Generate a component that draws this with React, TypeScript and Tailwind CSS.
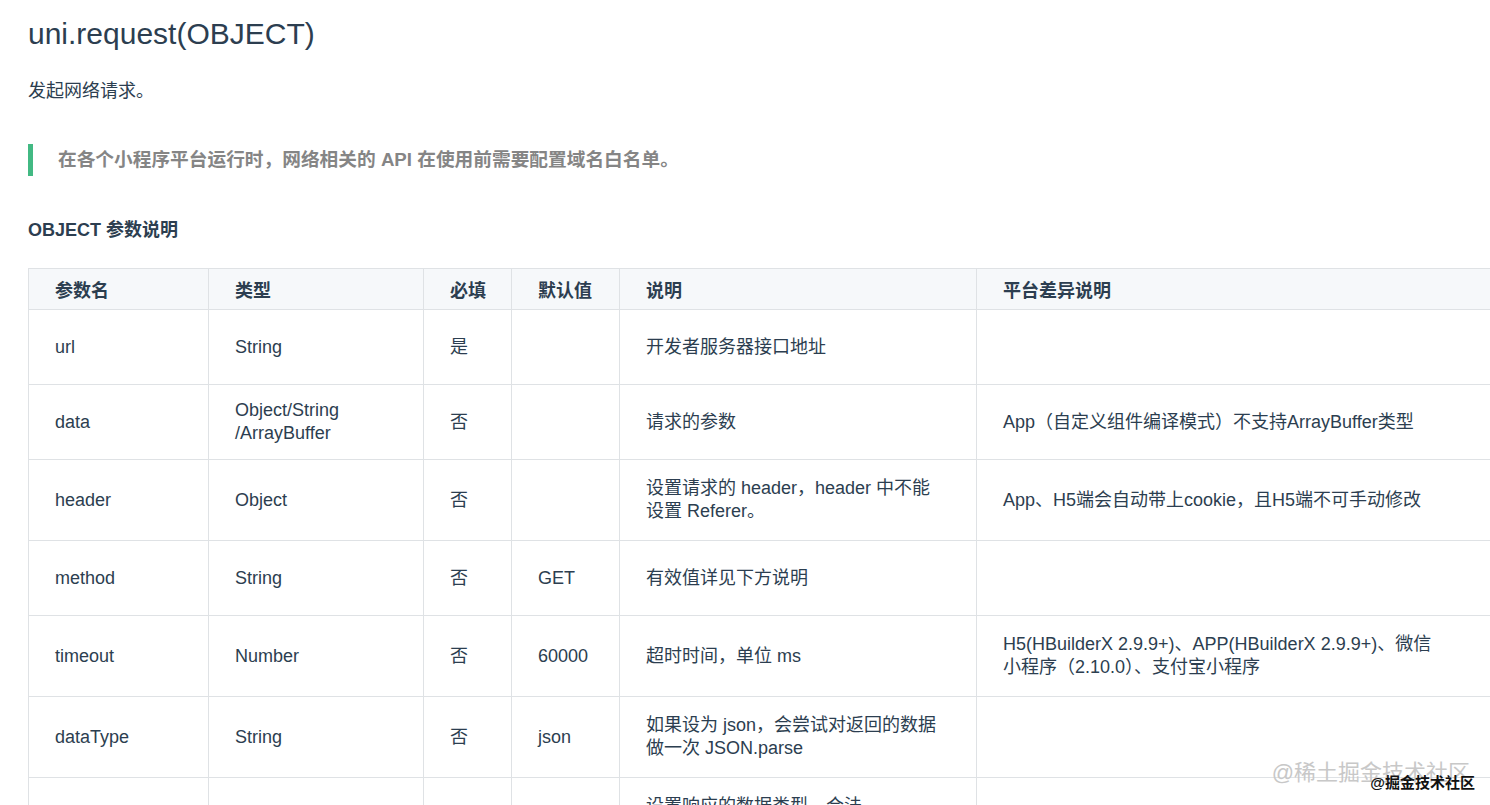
import React from 'react'

const FONT = '"Liberation Sans", "Noto Sans CJK SC", sans-serif'

type Row = {
  name: string
  type: React.ReactNode
  required: string
  def: string
  desc: React.ReactNode
  platform: React.ReactNode
  h: string
}

const rows: Row[] = [
  { name: 'url', type: 'String', required: '是', def: '', desc: '开发者服务器接口地址', platform: '', h: 'h-[75px]' },
  {
    name: 'data',
    type: (
      <>
        Object/String
        <br />
        /ArrayBuffer
      </>
    ),
    required: '否',
    def: '',
    desc: '请求的参数',
    platform: 'App（自定义组件编译模式）不支持ArrayBuffer类型',
    h: 'h-[75px]',
  },
  {
    name: 'header',
    type: 'Object',
    required: '否',
    def: '',
    desc: (
      <>
        设置请求的 header，header 中不能
        <br />
        设置 Referer。
      </>
    ),
    platform: 'App、H5端会自动带上cookie，且H5端不可手动修改',
    h: 'h-[81px]',
  },
  { name: 'method', type: 'String', required: '否', def: 'GET', desc: '有效值详见下方说明', platform: '', h: 'h-[75px]' },
  {
    name: 'timeout',
    type: 'Number',
    required: '否',
    def: '60000',
    desc: '超时时间，单位 ms',
    platform: (
      <>
        H5(HBuilderX 2.9.9+)、APP(HBuilderX 2.9.9+)、微信
        <br />
        小程序（2.10.0）、支付宝小程序
      </>
    ),
    h: 'h-[81px]',
  },
  {
    name: 'dataType',
    type: 'String',
    required: '否',
    def: 'json',
    desc: (
      <>
        如果设为 json，会尝试对返回的数据
        <br />
        做一次 JSON.parse
      </>
    ),
    platform: '',
    h: 'h-[81px]',
  },
  {
    name: 'responseType',
    type: 'String',
    required: '否',
    def: 'text',
    desc: (
      <>
        设置响应的数据类型。合法
        <br />
        值：text、arraybuffer
      </>
    ),
    platform: '支付宝小程序不支持',
    h: 'h-[81px]',
  },
]

const headers = ['参数名', '类型', '必填', '默认值', '说明', '平台差异说明']

export default function App() {
  return (
    <div
      className="relative w-[1490px] h-[805px] overflow-hidden bg-white text-[#2c3e50]"
      style={{ fontFamily: FONT }}
    >
      <div className="pl-[28px] pt-[15px]">
        <h1 className="text-[30px] leading-[37px] font-normal">uni.request(OBJECT)</h1>
        <p className="mt-[26px] text-[18px] leading-[27px]">发起网络请求。</p>

        <div className="mt-[39px] h-[32px] flex items-center border-l-[5px] border-[#42b983] pl-[25px]">
          <span className="text-[18.7px] font-bold text-[#858585]">
            在各个小程序平台运行时，网络相关的 API 在使用前需要配置域名白名单。
          </span>
        </div>

        <h3 className="mt-[41px] text-[18px] leading-[27px] font-bold">OBJECT 参数说明</h3>

        <table className="mt-[24px] table-fixed border-collapse w-[1560px] text-[18px] leading-[23px]">
          <colgroup>
            <col className="w-[180px]" />
            <col className="w-[215px]" />
            <col className="w-[88px]" />
            <col className="w-[108px]" />
            <col className="w-[357px]" />
            <col />
          </colgroup>
          <thead>
            <tr className="h-[41px] bg-[#f6f8fa]">
              {headers.map((h) => (
                <th
                  key={h}
                  className="border border-[#dfe2e5] px-[26px] pt-[5px] text-left font-bold text-[#2c3e50] whitespace-nowrap"
                >
                  {h}
                </th>
              ))}
            </tr>
          </thead>
          <tbody>
            {rows.map((r) => (
              <tr key={r.name} className={r.h}>
                <td className="border border-[#dfe2e5] px-[26px] align-middle">{r.name}</td>
                <td className="border border-[#dfe2e5] px-[26px] align-middle">{r.type}</td>
                <td className="border border-[#dfe2e5] px-[26px] align-middle">{r.required}</td>
                <td className="border border-[#dfe2e5] px-[26px] align-middle">{r.def}</td>
                <td className="border border-[#dfe2e5] px-[26px] align-middle whitespace-nowrap">{r.desc}</td>
                <td className="border border-[#dfe2e5] px-[26px] align-middle whitespace-nowrap">{r.platform}</td>
              </tr>
            ))}
          </tbody>
        </table>
      </div>

      {/* watermark */}
      <div className="absolute right-[20px] bottom-[19px] text-[22px] leading-[26px] text-[#c8c8c8] whitespace-nowrap">
        @稀土掘金技术社区
      </div>
      <div className="absolute right-[15px] bottom-[13px] text-[15px] leading-[18px] font-bold text-[#111] whitespace-nowrap">
        @掘金技术社区
      </div>
    </div>
  )
}
